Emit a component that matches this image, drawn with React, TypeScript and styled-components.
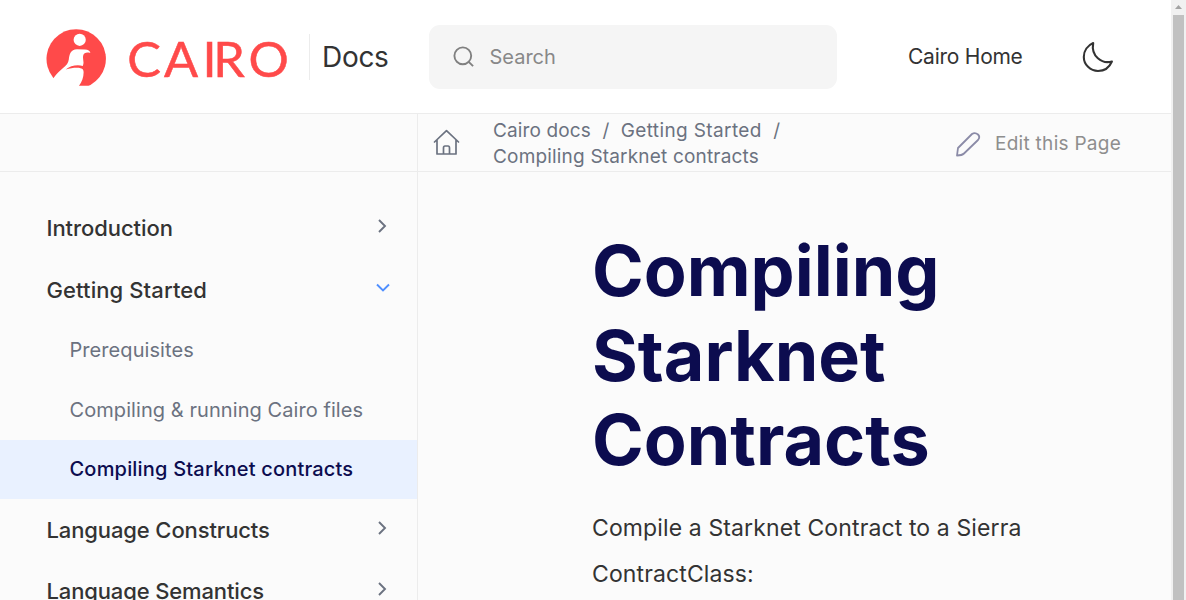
import React from 'react';
import styled, { createGlobalStyle } from 'styled-components';

const Global = createGlobalStyle`
  *, *::before, *::after { box-sizing: border-box; }
  html, body { margin: 0; padding: 0; height: 600px; overflow: hidden; }
  body { font-family: Inter, "Liberation Sans", sans-serif; color: #333; background: #fbfbfb; }
  svg { display: block; flex: none; }
`;

const Window = styled.div`
  display: flex;
  width: 1186px;
  height: 600px;
  overflow: hidden;
`;

const Page = styled.div`
  display: flex;
  flex-direction: column;
  width: 1171px;
  height: 600px;
  overflow: hidden;
`;

const Header = styled.header`
  display: flex;
  align-items: center;
  flex: none;
  height: 114px;
  padding-left: 46px;
  background: #fff;
  border-bottom: 1px solid #ececec;
`;

const Wordmark = styled.text`
  font-family: Lato, "Liberation Sans", sans-serif;
  font-size: 48px;
  fill: #ff4a4a;
  stroke: #ff4a4a;
  stroke-width: 0.5px;
`;

const Docs = styled.div`
  display: flex;
  align-items: center;
  width: 120px;
  height: 46px;
  margin-left: 21px;
  padding-left: 12px;
  border-left: 1px solid #ececec;
  font-size: 28px;
  letter-spacing: -0.3px;
`;

const SearchBox = styled.div`
  display: flex;
  align-items: center;
  gap: 14.5px;
  width: 408px;
  height: 64px;
  padding-left: 24px;
  background: #f5f5f5;
  border-radius: 11px;
  color: #888;
  font-size: 20px;
`;

const HomeLink = styled.a`
  width: 174px;
  margin-left: 71px;
  font-size: 21px;
  letter-spacing: -0.25px;
`;

const Columns = styled.div`
  display: flex;
  flex: 1;
  min-height: 0;
`;

const Sidebar = styled.nav`
  width: 418px;
  flex: none;
  border-right: 1px solid #ececec;
`;

const SidebarTop = styled.div`
  height: 58px;
  border-bottom: 1px solid #ececec;
  margin-bottom: 25px;
`;

const Section = styled.div<{ $first?: boolean; $track?: number }>`
  display: flex;
  align-items: center;
  justify-content: space-between;
  height: ${(p) => (p.$first ? 62 : 61)}px;
  padding: 0 26px ${(p) => (p.$first ? 1 : 0)}px 46.5px;
  font-size: 22px;
  font-weight: 500;
  letter-spacing: ${(p) => p.$track ?? 0}px;
`;

const Chevron = styled.svg`
  margin-top: -4px;
`;

const Item = styled.div<{ $active?: boolean }>`
  display: flex;
  align-items: center;
  height: ${(p) => (p.$active ? 59 : 60)}px;
  padding: 0 0 ${(p) => (p.$active ? 2 : 0)}px 69.5px;
  font-size: 20px;
  font-weight: ${(p) => (p.$active ? 500 : 400)};
  letter-spacing: ${(p) => (p.$active ? 0.19 : 0.07)}px;
  color: ${(p) => (p.$active ? '#0c0c4f' : '#6b7280')};
  background: ${(p) => (p.$active ? '#e9f1ff' : 'transparent')};
`;

const Main = styled.main`
  flex: 1;
`;

const Toolbar = styled.div`
  display: flex;
  align-items: center;
  height: 58px;
  padding-left: 15px;
  border-bottom: 1px solid #ececec;
`;

const Crumbs = styled.div`
  width: 430px;
  margin: 3px 0 0 33px;
  font-size: 19px;
  line-height: 26px;
  color: #6b7280;
`;

const CrumbRow = styled.div`
  display: flex;
  gap: 11.4px;
`;

const Crumb = styled.span<{ $track: number }>`
  letter-spacing: ${(p) => p.$track}px;
`;

const EditLink = styled.a`
  display: flex;
  align-items: center;
  gap: 14px;
  margin: 2px 0 0 32px;
  font-size: 19px;
  letter-spacing: 0.28px;
  color: #8e8e8e;
`;

const Article = styled.article`
  padding: 57px 0 0 174px;
`;

const Title = styled.h1`
  margin: 0;
  width: 420px;
  font-size: 70px;
  line-height: 84.5px;
  font-weight: 700;
  color: #0c0c4f;
`;

const Paragraph = styled.p`
  margin: 22px 0 0;
  width: 470px;
  font-size: 23px;
  line-height: 46px;
  letter-spacing: 0.12px;
`;

const Scrollbar = styled.div`
  display: flex;
  flex-direction: column;
  align-items: center;
  width: 15px;
  height: 600px;
  background: #f1f1f1;
`;

const Thumb = styled.div`
  width: 11px;
  flex: 1;
  background: #c1c1c1;
`;

const Logo = () => (
  <svg width="242" height="62" viewBox="46 26 242 62" fill="#ff4a4a">
    <path d="M53 77.4A29.7 29.7 0 1 1 90.500 84.900L88.500 85.800H60Z" />
    <path
      fill="#fff"
      d="M40 92L53.5 78C57 73 60 70.5 62.5 68.5C66.5 65.5 68.3 63 68.8 59.5C69.5 54 70.5 49.7 77 49.2L85 49.4C88 49.6 90 50.6 90.4 53C87 52 84 52.5 83.2 55.5C82.3 59.5 84.6 61.5 82.8 66C78 64.3 70 65.5 65.7 69.6C71 68 77 67.4 80.5 68.2C83 68.8 83.5 70 83.6 72C83.7 77 82 81.5 79 85.8V92Z"
    />
    <circle cx="79.7" cy="39.8" r="6.1" fill="#fff" />
    <Wordmark transform="scale(1.05 1)" x="121.1 156.3 192.8 203.1 236.6" y="76.7">CAIRO</Wordmark>
  </svg>
);

const Arrow = ({ open }: { open?: boolean }) => (
  <Chevron width="18" height="18" viewBox="0 0 18 18" fill="none" stroke={open ? '#4f8fff' : '#6b7280'} strokeWidth="1.9">
    <path d={open ? 'M4 5.5l6 6 6-6' : 'M6 3l6 6-6 6'} />
  </Chevron>
);

export default function App() {
  return (
    <Window>
      <Global />
      <Page>
        <Header>
          <Logo />
          <Docs>Docs</Docs>
          <SearchBox>
            <svg width="22" height="22" viewBox="0 0 22 22" fill="none" stroke="#808080" strokeWidth="1.9">
              <circle cx="9.8" cy="9.8" r="8.4" />
              <path d="M15.7 15.8l4.4 4.4" />
            </svg>
            Search
          </SearchBox>
          <HomeLink>Cairo Home</HomeLink>
          <svg width="32" height="32" viewBox="0 0 32 32" fill="none" stroke="#333" strokeWidth="2.1" strokeLinejoin="round">
            <path d="M11.2 2C5.6 4.4 1.8 9.8 1.8 15.9C1.8 23.6 8.4 30 16 30C22.200 30 27.400 26.300 29.900 20.500C19.8 23.400 8.8 15.200 11.2 2Z" />
          </svg>
        </Header>
        <Columns>
          <Sidebar>
            <SidebarTop />
            <Section $first $track={-0.07}>Introduction<Arrow /></Section>
            <Section $track={0.1}>Getting Started<Arrow open /></Section>
            <Item>Prerequisites</Item>
            <Item>Compiling &amp; running Cairo files</Item>
            <Item $active>Compiling Starknet contracts</Item>
            <Section $track={-0.12}>Language Constructs<Arrow /></Section>
            <Section $track={-0.14}>Language Semantics<Arrow /></Section>
          </Sidebar>
          <Main>
            <Toolbar>
              <svg width="27" height="27" viewBox="0 0 27 27" fill="none" stroke="#6b7280" strokeWidth="1.7" strokeLinejoin="round" strokeLinecap="round">
                <path d="M1.5 13L13.5 1.7L25.5 13M4 11.2V25H23V11.2M10.5 25V19Q10.5 17 12 17H15Q16.5 17 16.5 19V25" />
              </svg>
              <Crumbs>
                <CrumbRow>
                  <Crumb $track={0.14}>Cairo docs</Crumb>
                  <Crumb $track={0}>/</Crumb>
                  <Crumb $track={0.38}>Getting Started</Crumb>
                  <Crumb $track={0}>/</Crumb>
                </CrumbRow>
                <CrumbRow>
                  <Crumb $track={0.18}>Compiling Starknet contracts</Crumb>
                </CrumbRow>
              </Crumbs>
              <EditLink>
                <svg width="26" height="26" viewBox="0 0 26 26" fill="none" stroke="#8b8ba7" strokeWidth="1.8" strokeLinejoin="round">
                  <path d="M2 24.5L3 17L17 3Q20 1 23 3.5Q25.5 6 23 9L9 22.5Q7 24.5 2 24.5Z" />
                </svg>
                Edit this Page
              </EditLink>
            </Toolbar>
            <Article>
              <Title>Compiling Starknet Contracts</Title>
              <Paragraph>Compile a Starknet Contract to a Sierra ContractClass:</Paragraph>
            </Article>
          </Main>
        </Columns>
      </Page>
      <Scrollbar>
        <svg width="15" height="15" viewBox="0 0 15 15"><path d="M7.5 5L11 9H4Z" fill="#a3a3a3" /></svg>
        <Thumb />
      </Scrollbar>
    </Window>
  );
}
